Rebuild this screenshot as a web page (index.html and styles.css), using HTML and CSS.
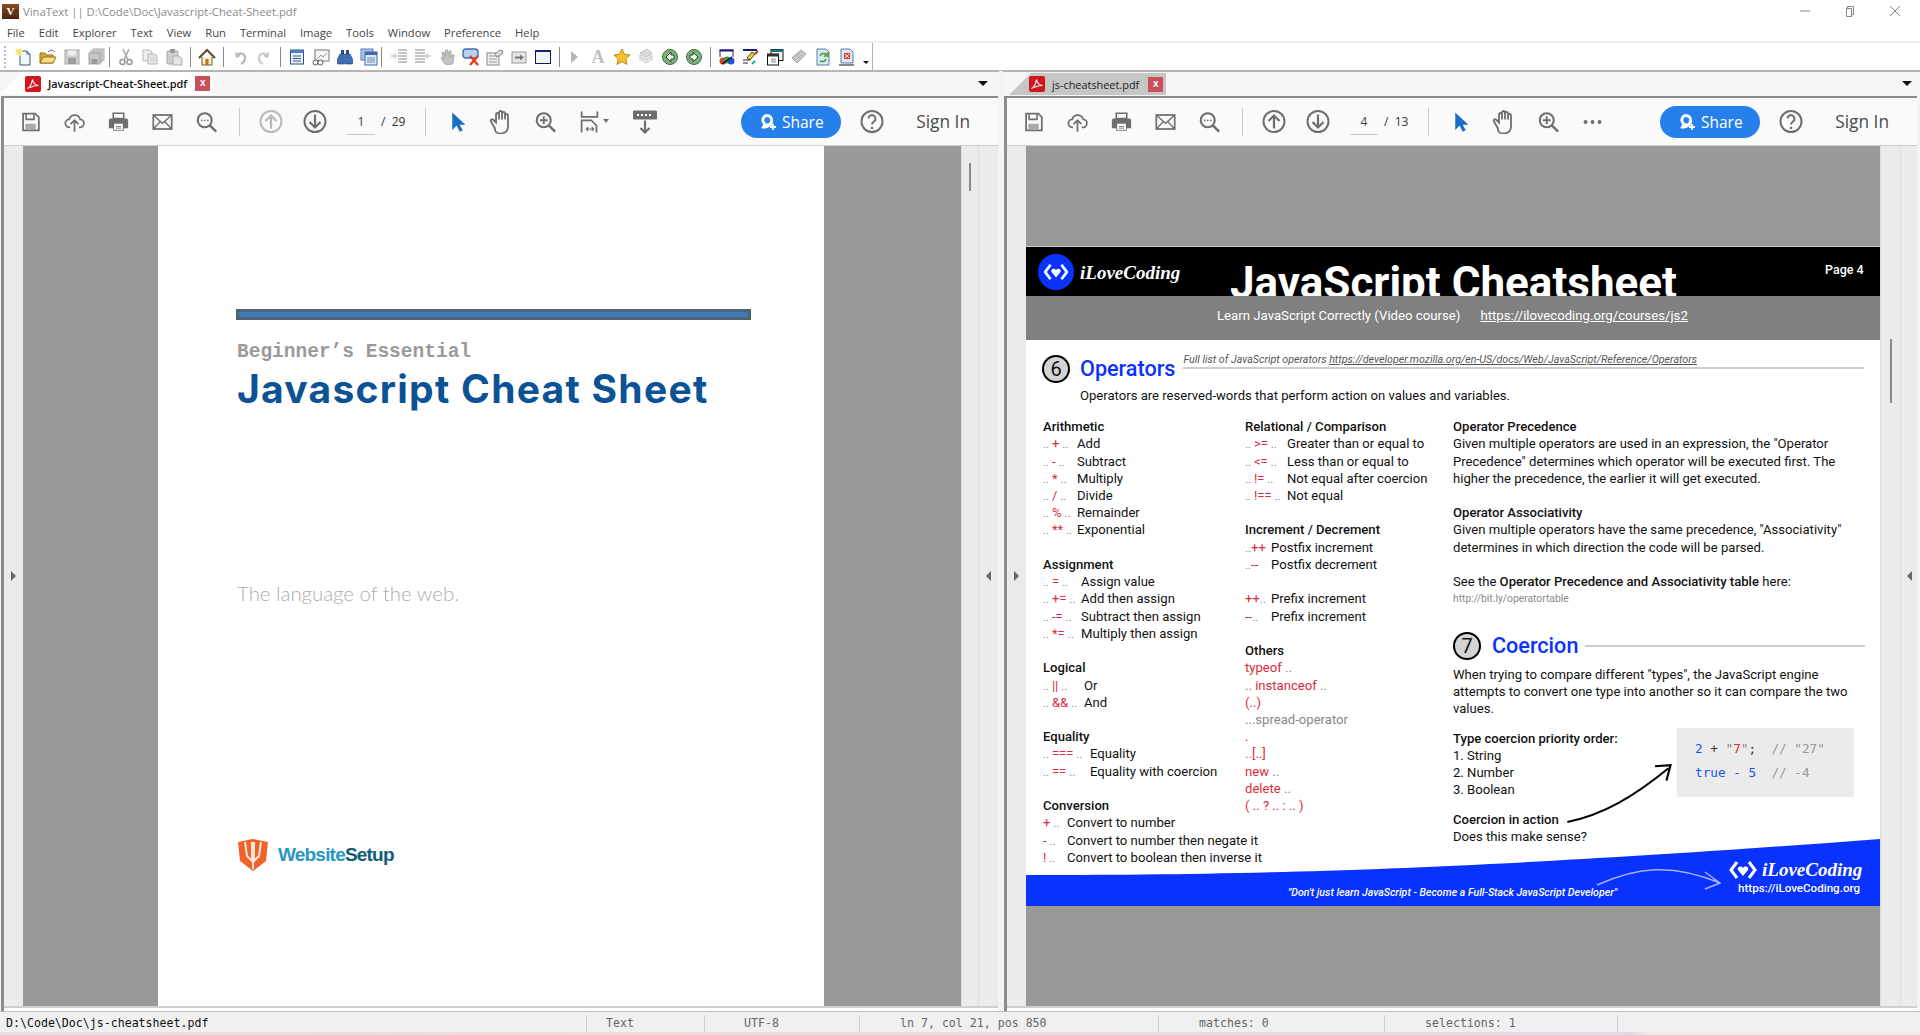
FILE: index.html
```html
<!DOCTYPE html>
<html lang="en">
<head>
<meta charset="utf-8">
<title>VinaText</title>
<link rel="stylesheet" href="styles.css">
</head>
<body>
<svg class="sprite" xmlns="http://www.w3.org/2000/svg">
  <symbol id="t-new" viewBox="0 0 18 18"><path d="M5 3h7l3 3v11H5z" fill="#f2f7fc" stroke="#34567f"/><path d="M12 3v3h3" fill="#cfe0f0" stroke="#34567f"/><rect x="1" y="1" width="6" height="6" fill="#f5dc78" stroke="#fff3b0"/></symbol>
  <symbol id="t-open" viewBox="0 0 18 18"><path d="M1 5h5l1 2h7v8H1z" fill="#dba93a" stroke="#91701f"/><path d="M1 15l3-6h13l-3 6z" fill="#f8dd84" stroke="#91701f"/><path d="M9 4c3-3 5-2 7 0" stroke="#667" fill="none"/></symbol>
  <symbol id="t-save" viewBox="0 0 18 18"><rect x="2" y="2" width="14" height="14" fill="#cdcdcd" stroke="#a8a8a8"/><rect x="5" y="2.500" width="8" height="5" fill="#efefef"/><rect x="5" y="10" width="8" height="6" fill="#9c9c9c"/></symbol>
  <symbol id="t-saveall" viewBox="0 0 18 18"><rect x="6" y="1" width="11" height="11" fill="#ddd" stroke="#aaa"/><rect x="4" y="3" width="11" height="11" fill="#d2d2d2" stroke="#aaa"/><rect x="2" y="5" width="11" height="11" fill="#c6c6c6" stroke="#a0a0a0"/><rect x="4.500" y="11" width="6" height="5" fill="#999"/></symbol>
  <symbol id="t-cut" viewBox="0 0 18 18"><path d="M6 1l5 11M12 1L7 12" stroke="#aaa" stroke-width="1.600" fill="none"/><circle cx="5.500" cy="14" r="2.500" fill="none" stroke="#999" stroke-width="1.500"/><circle cx="12.500" cy="14" r="2.500" fill="none" stroke="#999" stroke-width="1.500"/></symbol>
  <symbol id="t-copy" viewBox="0 0 18 18"><path d="M2 2h7l2 2v9H2z" fill="#eee" stroke="#bbb"/><path d="M7 6h7l2 2v8H7z" fill="#e5e5e5" stroke="#b5b5b5"/><path d="M9 10h5M9 12h5" stroke="#ccc"/></symbol>
  <symbol id="t-paste" viewBox="0 0 18 18"><rect x="2" y="3" width="11" height="13" rx="1" fill="#cfcfcf" stroke="#a5a5a5"/><rect x="5" y="1" width="5" height="4" fill="#999"/><path d="M8 8h6l3 3v6H8z" fill="#e5e5e5" stroke="#aaa"/></symbol>
  <symbol id="t-home" viewBox="0 0 18 18"><path d="M4 9v8h10V9" fill="#fbeec0" stroke="#665a30"/><path d="M1 10l8-8 8 8" fill="none" stroke="#5a4a28" stroke-width="2"/><rect x="7.500" y="11" width="3" height="6" fill="#b8731c"/></symbol>
  <symbol id="t-undo" viewBox="0 0 18 18"><path d="M4 4l1 6 5-2z" fill="#bbb"/><path d="M6 7c4-3 8-1 8 3 0 3-2 5-4 6" fill="none" stroke="#bbb" stroke-width="2.400"/></symbol>
  <symbol id="t-redo" viewBox="0 0 18 18"><path d="M14 4l-1 6-5-2z" fill="#bbb"/><path d="M12 7C8 4 4 6 4 10c0 3 2 5 4 6" fill="none" stroke="#cfcfcf" stroke-width="2.400"/></symbol>
  <symbol id="t-doc" viewBox="0 0 18 18"><rect x="2.500" y="2" width="13" height="14" fill="#eaf1fa" stroke="#2d4f82"/><rect x="2.500" y="2" width="13" height="3" fill="#4b7fc2"/><path d="M5 8h8M5 10.500h8M5 13h8" stroke="#36598c"/></symbol>
  <symbol id="t-chart" viewBox="0 0 18 18"><rect x="3" y="2" width="14" height="11" fill="#f5f5f5" stroke="#777"/><path d="M5 11l4-4 2 2 4-4" fill="none" stroke="#999"/><circle cx="3.500" cy="14.500" r="2.500" fill="#fff" stroke="#555"/><circle cx="8.500" cy="14.500" r="2.500" fill="#fff" stroke="#555"/></symbol>
  <symbol id="t-binoc" viewBox="0 0 18 18"><path d="M5 2h3v5H5zM10 2h3v5h-3z" fill="#244f8c"/><path d="M4 6h4.500v10H1.500V11zM14 6H9.500v10h7V11z" fill="#3a6fb8" stroke="#1d3b6b" stroke-width=".6"/></symbol>
  <symbol id="t-win" viewBox="0 0 18 18"><rect x="1" y="1" width="12" height="11" fill="#a9c3e6" stroke="#5a7fb3"/><rect x="5" y="4" width="12" height="13" fill="#dde8f6" stroke="#3e6aa8"/><rect x="5" y="4" width="12" height="3" fill="#3e6aa8"/><path d="M7 10h8M7 12h8M7 14h8" stroke="#6e8fbf"/></symbol>
  <symbol id="t-indent" viewBox="0 0 18 18"><path d="M8 2h9M8 5h9M8 8h9M8 11h9M8 14h9" stroke="#888"/><path d="M1 8h5M4 5.500L6.500 8 4 10.500" stroke="#aaa" fill="none"/></symbol>
  <symbol id="t-outdent" viewBox="0 0 18 18"><path d="M1 2h10M1 5h10M1 8h10M1 11h10M1 14h10" stroke="#888"/><path d="M17 8h-5M14 5.500L11.500 8l2.500 2.500" stroke="#aaa" fill="none"/></symbol>
  <symbol id="t-hand" viewBox="0 0 18 18"><path d="M3 9l3 6c1 2 8 2 9 0l1-8-2 0-1 3V3l-2 0-.500 6-1-7-2 0 0 7-1.500-5-2 .500 1 7z" fill="#c4c4c4" stroke="#aaa"/></symbol>
  <symbol id="t-msgx" viewBox="0 0 18 18"><rect x="1" y="1" width="15" height="9" rx="3" fill="#b9d0ee" stroke="#3c6fb5" stroke-width="1.400"/><path d="M8 8l8 9M16 8l-8 9" stroke="#e23b28" stroke-width="2.400"/></symbol>
  <symbol id="t-form" viewBox="0 0 18 18"><rect x="1" y="5" width="12" height="12" fill="#eee" stroke="#888"/><path d="M3 8h8M3 11h8M3 14h8" stroke="#999"/><path d="M9 6l5-4 3 1-1 3-5 3z" fill="#ddd" stroke="#888"/></symbol>
  <symbol id="t-box" viewBox="0 0 18 18"><rect x="2" y="4" width="14" height="11" fill="#e5e5e5" stroke="#999"/><path d="M5 9.500h6" stroke="#777" stroke-width="2"/><path d="M10 6.500l4 3-4 3z" fill="#777"/></symbol>
  <symbol id="t-frame" viewBox="0 0 18 18"><rect x="1.500" y="2.500" width="15" height="13" fill="#eef3fa" stroke="#111a50"/><rect x="1.500" y="2" width="15" height="2" fill="#14207a"/></symbol>
  <symbol id="t-play" viewBox="0 0 18 18"><path d="M6 3l7 6-7 6z" fill="#b5b5b5"/></symbol>
  <symbol id="t-star" viewBox="0 0 18 18"><path d="M9 1l2.400 5.300 5.600.700-4.200 3.800 1.200 5.700L9 13.600 4 16.500l1.200-5.700L1 7l5.600-.700z" fill="#f6c32c" stroke="#b88a12"/></symbol>
  <symbol id="t-stack" viewBox="0 0 18 18"><path d="M2 11l7 4 7-4-7-4z" fill="#eee" stroke="#ccc"/><path d="M2 8l7 4 7-4-7-4z" fill="#e8e8e8" stroke="#c8c8c8"/><path d="M3 5l6 4 6-4-5-4z" fill="#ddd" stroke="#c0c0c0"/></symbol>
  <symbol id="t-back" viewBox="0 0 18 18"><circle cx="9" cy="9" r="7.500" fill="#7eb17e" stroke="#3f6b3f"/><path d="M10 4L5 9l5 5v-3h3V7h-3z" fill="#eef5ee" stroke="#264726"/></symbol>
  <symbol id="t-fwd" viewBox="0 0 18 18"><circle cx="9" cy="9" r="7.500" fill="#7eb17e" stroke="#3f6b3f"/><path d="M8 4l5 5-5 5v-3H5V7h3z" fill="#eef5ee" stroke="#264726"/></symbol>
  <symbol id="t-c1" viewBox="0 0 18 18"><path d="M2 2h13v7M2 2v7" fill="#fff" stroke="#1d2a6b"/><rect x="1.500" y="1.500" width="14" height="2" fill="#16207a"/><circle cx="5" cy="13" r="3.500" fill="#e23b28"/><circle cx="9" cy="12" r="3.500" fill="#2e9e3e"/><circle cx="13" cy="13" r="3.500" fill="#2a50d0"/><path d="M4 16L14 9" stroke="#111" stroke-width="1.500"/></symbol>
  <symbol id="t-c2" viewBox="0 0 18 18"><rect x="1" y="1" width="14" height="2" fill="#16207a"/><path d="M5 10l5-6 3 2-5 6z" fill="#f2d21c" stroke="#444"/><path d="M13 6l3-3" stroke="#c33" stroke-width="2"/><path d="M1 12h7M1 15h5" stroke="#222"/><path d="M10 16l3-3" stroke="#2a9" stroke-width="2"/></symbol>
  <symbol id="t-c3" viewBox="0 0 18 18"><rect x="5" y="1.500" width="12" height="11" fill="#eef" stroke="#111"/><rect x="5" y="1.500" width="12" height="2.500" fill="#157a7a"/><rect x="1.500" y="6" width="11" height="11" fill="#fff" stroke="#111"/><rect x="1.500" y="6" width="11" height="2.500" fill="#333"/><rect x="6" y="11" width="3" height="3" fill="none" stroke="#888"/></symbol>
  <symbol id="t-c4" viewBox="0 0 18 18"><path d="M2 10l9-8 5 4-9 9z" fill="#c9c9c9" stroke="#a0a0a0"/><path d="M6 8l4-3M8 10l4-3" stroke="#aaa"/></symbol>
  <symbol id="t-c5" viewBox="0 0 18 18"><path d="M3 1h9l3 3v13H3z" fill="#dce8f5" stroke="#5f7fa5"/><path d="M6 8c1-3 4-3 6-2l-1 2 3 0 0-3-1 1" fill="none" stroke="#3f9a2c" stroke-width="1.500"/><path d="M12 11c-1 3-4 3-6 2" fill="none" stroke="#3f9a2c" stroke-width="1.500"/></symbol>
  <symbol id="t-c6" viewBox="0 0 18 18"><path d="M3 1h9l3 3v11H3z" fill="#dce8f5" stroke="#5f7fa5"/><rect x="6" y="5" width="6" height="6" fill="#e23b28"/><path d="M7 6l4 4M11 6l-4 4" stroke="#fff"/><path d="M1 17h15" stroke="#111"/></symbol>

  <symbol id="p-save" viewBox="0 0 24 24"><path d="M3.500 2.500h14l4 4v15h-18z" fill="none" stroke="#6e6e6e" stroke-width="2"/><path d="M7 3v6h9V3" fill="none" stroke="#6e6e6e" stroke-width="1.800"/><rect x="6" y="14" width="12" height="7" fill="#aaa"/></symbol>
  <symbol id="p-upload" viewBox="0 0 24 24"><path d="M7 18H6a4.500 4.500 0 0 1 0-9 6.500 6.500 0 0 1 12.500 0 4.500 4.500 0 0 1-.5 9h-1" fill="none" stroke="#6e6e6e" stroke-width="2"/><path d="M12 23V10M7.500 14.500L12 10l4.500 4.500" fill="none" stroke="#6e6e6e" stroke-width="2"/></symbol>
  <symbol id="p-print" viewBox="0 0 24 24"><path d="M6 2h12v6H6z" fill="none" stroke="#6e6e6e" stroke-width="1.800"/><path d="M3 8h18a2 2 0 0 1 2 2v9h-5v3H6v-3H1v-9a2 2 0 0 1 2-2z" fill="#6e6e6e"/><rect x="7" y="14" width="10" height="7" fill="#fff"/><path d="M9 17h6M9 19h6" stroke="#6e6e6e"/></symbol>
  <symbol id="p-mail" viewBox="0 0 24 24"><rect x="1.500" y="4" width="21" height="16" fill="none" stroke="#6e6e6e" stroke-width="2"/><path d="M2 4.500l10 9 10-9M2 19.500l7.500-8M22 19.500l-7.500-8" fill="none" stroke="#6e6e6e" stroke-width="1.500"/></symbol>
  <symbol id="p-find" viewBox="0 0 24 24"><circle cx="10" cy="10" r="8" fill="none" stroke="#6e6e6e" stroke-width="2.400"/><path d="M15.500 15.500L23 23" stroke="#6e6e6e" stroke-width="2.800"/><circle cx="6.500" cy="10" r="1" fill="#6e6e6e"/><circle cx="10" cy="10" r="1" fill="#6e6e6e"/><circle cx="13.500" cy="10" r="1" fill="#6e6e6e"/></symbol>
  <symbol id="p-up" viewBox="0 0 24 24"><circle cx="12" cy="12" r="10.500" fill="none" stroke="currentColor" stroke-width="2"/><path d="M12 19V6M6.500 11.500L12 6l5.500 5.500" fill="none" stroke="currentColor" stroke-width="2.200"/></symbol>
  <symbol id="p-down" viewBox="0 0 24 24"><circle cx="12" cy="12" r="10.500" fill="none" stroke="currentColor" stroke-width="2"/><path d="M12 5v13M6.500 12.500L12 18l5.500-5.500" fill="none" stroke="currentColor" stroke-width="2.200"/></symbol>
  <symbol id="p-arrow" viewBox="0 0 24 24"><path d="M6 1v20l5-5 3.500 7 3.500-1.500-3.500-6.500H21z" fill="#1a6fc4"/></symbol>
  <symbol id="p-hand" viewBox="0 0 24 24"><path d="M6 19l-4-7c-1-2 1-3 2.500-1.500L7 13V5c0-2 3-2 3 0v5-7c0-2 3-2 3 0v7-6c0-2 3-2 3 0v6-4c0-2 3-2 3 0v11c0 8-11 9-13 4z" fill="none" stroke="#6e6e6e" stroke-width="1.800"/></symbol>
  <symbol id="p-zoom" viewBox="0 0 24 24"><circle cx="10" cy="10" r="8" fill="none" stroke="#6e6e6e" stroke-width="2.400"/><path d="M15.500 15.500L23 23" stroke="#6e6e6e" stroke-width="2.800"/><path d="M10 5.500v9M5.500 10h9" stroke="#6e6e6e" stroke-width="2.200"/></symbol>
  <symbol id="p-fit" viewBox="0 0 24 24"><path d="M3 0v6h18V0" fill="none" stroke="#6e6e6e" stroke-width="2"/><path d="M3 24V10h11l6 6v8" fill="none" stroke="#6e6e6e" stroke-width="2"/><path d="M8 20h9M8 20l2.500-2M8 20l2.500 2M17 20l-2.500-2M17 20l-2.500 2" fill="none" stroke="#6e6e6e" stroke-width="1.300"/></symbol>
  <symbol id="p-kbd" viewBox="0 0 24 24"><rect x="0" y="1" width="24" height="9" rx="1" fill="#6e6e6e"/><path d="M4 5.500h2M8 5.500h2M12 5.500h2M16 5.500h2" stroke="#fff" stroke-width="1.800"/><path d="M12 11v12M7.500 18.500L12 23l4.500-4.500" fill="none" stroke="#6e6e6e" stroke-width="2.200"/></symbol>
  <symbol id="p-share" viewBox="0 0 18 18"><path d="M8 1a6 6 0 0 0-4 10c0 2-1 3-2 4 3 1 6 .500 8-1a6.500 6.500 0 0 0 4-7A6 6 0 0 0 8 1z" fill="#fff"/><path d="M8 4a3 3 0 0 0-2 5c1 2 4 2 4.500 0A3 3 0 0 0 8 4z" fill="#2680eb"/><path d="M14 11v6M11 14h6" stroke="#fff" stroke-width="1.800"/></symbol>
  <symbol id="p-help" viewBox="0 0 24 24"><circle cx="12" cy="12" r="10.500" fill="none" stroke="#6e6e6e" stroke-width="2"/><path d="M8.500 9a3.500 3.500 0 1 1 5.500 3c-1.500 1-2 1.500-2 3" fill="none" stroke="#6e6e6e" stroke-width="2"/><circle cx="12" cy="18.500" r="1.300" fill="#6e6e6e"/></symbol>
  <symbol id="p-more" viewBox="0 0 24 24"><circle cx="4" cy="12" r="2.200" fill="#6e6e6e"/><circle cx="12" cy="12" r="2.200" fill="#6e6e6e"/><circle cx="20" cy="12" r="2.200" fill="#6e6e6e"/></symbol>
  <symbol id="pdf-badge" viewBox="0 0 16 16"><rect width="16" height="16" rx="2" fill="#d2151b"/><path d="M2.500 12.500c2-1 4-4 5-9 .500 3 2 5.500 6 6-3 0-6 .500-8.500 2" fill="none" stroke="#fff" stroke-width="1.200"/></symbol>
  <symbol id="ilc-mark" viewBox="0 0 28 20"><path d="M8 2L2 10l6 8M20 2l6 8-6 8" fill="none" stroke="#fff" stroke-width="3"/><path d="M14 16l-5-6c-1.500-3 3-5 5-2 2-3 6.500-1 5 2z" fill="#fff"/></symbol>
</svg>

<header class="titlebar">
  <span class="app-icon">V</span>
  <span class="app-title">VinaText || D:\Code\Doc\Javascript-Cheat-Sheet.pdf</span>
  <div class="winbtns">
    <svg class="winbtn" viewBox="0 0 12 12"><path d="M1 6h10" stroke="#888" fill="none"/></svg>
    <svg class="winbtn" viewBox="0 0 12 12"><path d="M3.500 3.500v-2h6v8h-2M2.500 3.500h5v8h-5z" stroke="#888" fill="none"/></svg>
    <svg class="winbtn" viewBox="0 0 12 12"><path d="M1 1l10 10M11 1L1 11" stroke="#888" fill="none"/></svg>
  </div>
</header>

<nav class="menubar">
  <span>File</span><span>Edit</span><span>Explorer</span><span>Text</span><span>View</span><span>Run</span><span>Terminal</span><span>Image</span><span>Tools</span><span>Window</span><span>Preference</span><span>Help</span>
</nav>

<div class="toolbar">
  <div class="tools">
    <span class="grip"></span>
    <svg class="ti"><use href="#t-new"/></svg><svg class="ti"><use href="#t-open"/></svg><svg class="ti"><use href="#t-save"/></svg><svg class="ti"><use href="#t-saveall"/></svg>
    <span class="tsep first"></span>
    <svg class="ti"><use href="#t-cut"/></svg><svg class="ti"><use href="#t-copy"/></svg><svg class="ti"><use href="#t-paste"/></svg>
    <span class="tsep"></span>
    <svg class="ti"><use href="#t-home"/></svg>
    <span class="tsep"></span>
    <svg class="ti"><use href="#t-undo"/></svg><svg class="ti"><use href="#t-redo"/></svg>
    <span class="tsep"></span>
    <svg class="ti"><use href="#t-doc"/></svg><svg class="ti"><use href="#t-chart"/></svg><svg class="ti"><use href="#t-binoc"/></svg><svg class="ti"><use href="#t-win"/></svg>
    <span class="tsep wide"></span>
    <svg class="ti"><use href="#t-indent"/></svg><svg class="ti"><use href="#t-outdent"/></svg><svg class="ti"><use href="#t-hand"/></svg><svg class="ti"><use href="#t-msgx"/></svg><svg class="ti"><use href="#t-form"/></svg><svg class="ti"><use href="#t-box"/></svg><svg class="ti"><use href="#t-frame"/></svg>
    <span class="tsep tight"></span>
    <svg class="ti"><use href="#t-play"/></svg><span class="ti ti-letter">A</span><svg class="ti"><use href="#t-star"/></svg><svg class="ti"><use href="#t-stack"/></svg><svg class="ti"><use href="#t-back"/></svg><svg class="ti"><use href="#t-fwd"/></svg>
    <span class="tsep"></span>
    <svg class="ti"><use href="#t-c1"/></svg><svg class="ti"><use href="#t-c2"/></svg><svg class="ti"><use href="#t-c3"/></svg><svg class="ti"><use href="#t-c4"/></svg><svg class="ti"><use href="#t-c5"/></svg><svg class="ti"><use href="#t-c6"/></svg>
    <span class="tcaret"></span>
  </div>
</div>

<main class="panes">
  <section class="pane pane-left">
    <div class="tabbar">
      <div class="tab tab-active">
        <svg class="tab-icon"><use href="#pdf-badge"/></svg>
        <span class="tab-name">Javascript-Cheat-Sheet.pdf</span>
        <span class="tab-x">x</span>
      </div>
      <span class="tabs-menu"></span>
    </div>
    <div class="frame">
      <div class="pdfbar">
        <div class="pb"><svg class="pi"><use href="#p-save"/></svg></div>
        <div class="pb"><svg class="pi"><use href="#p-upload"/></svg></div>
        <div class="pb"><svg class="pi"><use href="#p-print"/></svg></div>
        <div class="pb"><svg class="pi"><use href="#p-mail"/></svg></div>
        <div class="pb"><svg class="pi"><use href="#p-find"/></svg></div>
        <span class="psep"></span>
        <div class="pb pb-off"><svg class="pi pi-lg"><use href="#p-up"/></svg></div>
        <div class="pb pb-on"><svg class="pi pi-lg"><use href="#p-down"/></svg></div>
        <div class="pager"><span class="pager-cur">1</span><span class="pager-total">/&nbsp; 29</span></div>
        <span class="psep"></span>
        <div class="pb"><svg class="pi"><use href="#p-arrow"/></svg></div>
        <div class="pb"><svg class="pi pi-lg"><use href="#p-hand"/></svg></div>
        <div class="pb"><svg class="pi"><use href="#p-zoom"/></svg></div>
        <div class="pb pb-fit"><svg class="pi"><use href="#p-fit"/></svg><span class="mini-caret"></span></div>
        <div class="pb pb-kbd"><svg class="pi pi-lg"><use href="#p-kbd"/></svg></div>
        <button class="share"><svg class="share-icon"><use href="#p-share"/></svg>Share</button>
        <div class="pb pb-help"><svg class="pi pi-lg"><use href="#p-help"/></svg></div>
        <span class="signin">Sign In</span>
      </div>
      <div class="viewer">
        <div class="gutter"><span class="arrow-r"></span></div>
        <div class="canvas canvas-left">
          <article class="cover">
            <div class="cover-bar"></div>
            <p class="cover-kicker">Beginner’s Essential</p>
            <h1 class="cover-title">Javascript Cheat Sheet</h1>
            <p class="cover-sub">The language of the web.</p>
            <div class="ws-logo">
              <svg class="ws-shield" viewBox="0 0 30 32"><path d="M0 3l15-3 15 3-2 19-13 10L2 22z" fill="#f0622a"/><path d="M7 3l2 14 5 5V3M23 3l-2 14-5 5V3" fill="none" stroke="#fbe6da" stroke-width="2"/><path d="M15 22v8" stroke="#fbe6da" stroke-width="2"/></svg>
              <span class="ws-name"><span class="ws-a">Website</span><span class="ws-b">Setup</span></span>
            </div>
          </article>
        </div>
        <div class="side side-a"><span class="thumb thumb-left"></span></div>
        <div class="side side-b"><span class="arrow-l"></span></div>
      </div>
      <div class="frame-foot"></div>
    </div>
  </section>

  <section class="pane pane-right">
    <div class="tabbar">
      <div class="tab tab-idle">
        <svg class="tab-icon"><use href="#pdf-badge"/></svg>
        <span class="tab-name">js-cheatsheet.pdf</span>
        <span class="tab-x">x</span>
      </div>
      <span class="tabs-menu"></span>
    </div>
    <div class="frame">
      <div class="pdfbar">
        <div class="pb"><svg class="pi"><use href="#p-save"/></svg></div>
        <div class="pb"><svg class="pi"><use href="#p-upload"/></svg></div>
        <div class="pb"><svg class="pi"><use href="#p-print"/></svg></div>
        <div class="pb"><svg class="pi"><use href="#p-mail"/></svg></div>
        <div class="pb"><svg class="pi"><use href="#p-find"/></svg></div>
        <span class="psep"></span>
        <div class="pb pb-on"><svg class="pi pi-lg"><use href="#p-up"/></svg></div>
        <div class="pb pb-on"><svg class="pi pi-lg"><use href="#p-down"/></svg></div>
        <div class="pager"><span class="pager-cur">4</span><span class="pager-total">/&nbsp; 13</span></div>
        <span class="psep"></span>
        <div class="pb"><svg class="pi"><use href="#p-arrow"/></svg></div>
        <div class="pb"><svg class="pi pi-lg"><use href="#p-hand"/></svg></div>
        <div class="pb"><svg class="pi"><use href="#p-zoom"/></svg></div>
        <div class="pb"><svg class="pi"><use href="#p-more"/></svg></div>
        <button class="share"><svg class="share-icon"><use href="#p-share"/></svg>Share</button>
        <div class="pb pb-help"><svg class="pi pi-lg"><use href="#p-help"/></svg></div>
        <span class="signin">Sign In</span>
      </div>
      <div class="viewer">
        <div class="gutter"><span class="arrow-r"></span></div>
        <div class="canvas canvas-right">
          <article class="sheet">
            <header class="sheet-top">
              <svg class="ilc-circle" viewBox="0 0 36 36"><circle cx="18" cy="18" r="18" fill="#0a32ff"/><use href="#ilc-mark" x="5" y="9" width="26" height="18"/></svg>
              <span class="ilc-word">iLoveCoding</span>
              <span class="sheet-title">JavaScript Cheatsheet</span>
              <span class="sheet-page">Page 4</span>
            </header>
            <div class="sheet-band"><span>Learn JavaScript Correctly (Video course)</span><a class="band-link">https://ilovecoding.org/courses/js2</a></div>

            <div class="sec-head sec6">
              <span class="num">6</span>
              <h2 class="sec-title">Operators</h2>
              <div class="sec-rule-wrap">
                <p class="sec-note">Full list of JavaScript operators <u>https://developer.mozilla.org/en-US/docs/Web/JavaScript/Reference/Operators</u></p>
              </div>
            </div>
            <p class="sec-desc">Operators are reserved-words that perform action on values and variables.</p>

            <div class="sheet-cols">
              <div class="col col1">
                <div class="grp">
                  <div class="gh">Arithmetic</div>
                  <div class="ops w34">
                    <span class="op">.. <b>+</b> ..</span><span>Add</span>
                    <span class="op">.. <b>-</b> ..</span><span>Subtract</span>
                    <span class="op">.. <b>*</b> ..</span><span>Multiply</span>
                    <span class="op">.. <b>/</b> ..</span><span>Divide</span>
                    <span class="op">.. <b>%</b> ..</span><span>Remainder</span>
                    <span class="op">.. <b>**</b> ..</span><span>Exponential</span>
                  </div>
                </div>
                <div class="grp">
                  <div class="gh">Assignment</div>
                  <div class="ops w38">
                    <span class="op">.. <b>=</b> ..</span><span>Assign value</span>
                    <span class="op">.. <b>+=</b> ..</span><span>Add then assign</span>
                    <span class="op">.. <b>-=</b> ..</span><span>Subtract then assign</span>
                    <span class="op">.. <b>*=</b> ..</span><span>Multiply then assign</span>
                  </div>
                </div>
                <div class="grp">
                  <div class="gh">Logical</div>
                  <div class="ops w41">
                    <span class="op">.. <b>||</b> ..</span><span>Or</span>
                    <span class="op">.. <b>&amp;&amp;</b> ..</span><span>And</span>
                  </div>
                </div>
                <div class="grp">
                  <div class="gh">Equality</div>
                  <div class="ops w47">
                    <span class="op">.. <b>===</b> ..</span><span>Equality</span>
                    <span class="op">.. <b>==</b> ..</span><span>Equality with coercion</span>
                  </div>
                </div>
                <div class="grp">
                  <div class="gh">Conversion</div>
                  <div class="ops w24">
                    <span class="op"><b>+</b> ..</span><span>Convert to number</span>
                    <span class="op"><b>-</b> ..</span><span>Convert to number then negate it</span>
                    <span class="op"><b>!</b> ..</span><span>Convert to boolean then inverse it</span>
                  </div>
                </div>
              </div>

              <div class="col col2">
                <div class="grp">
                  <div class="gh">Relational / Comparison</div>
                  <div class="ops w42">
                    <span class="op">.. <b>&gt;=</b> ..</span><span>Greater than or equal to</span>
                    <span class="op">.. <b>&lt;=</b> ..</span><span>Less than or equal to</span>
                    <span class="op">.. <b>!=</b> ..</span><span>Not equal after coercion</span>
                    <span class="op">.. <b>!==</b> ..</span><span>Not equal</span>
                  </div>
                </div>
                <div class="grp">
                  <div class="gh">Increment / Decrement</div>
                  <div class="ops w26">
                    <span class="op">..<b>++</b></span><span>Postfix increment</span>
                    <span class="op">..<b>--</b></span><span>Postfix decrement</span>
                    <span class="blank"></span>
                    <span class="op"><b>++</b>..</span><span>Prefix increment</span>
                    <span class="op"><b>--</b>..</span><span>Prefix increment</span>
                  </div>
                </div>
                <div class="grp">
                  <div class="gh">Others</div>
                  <div class="reds">
                    <div><b>typeof</b> ..</div>
                    <div>.. <b>instanceof</b> ..</div>
                    <div><b>(..)</b></div>
                    <div>...<span class="spread">spread-operator</span></div>
                    <div><b>.</b></div>
                    <div>..<b>[..]</b></div>
                    <div><b>new</b> ..</div>
                    <div><b>delete</b> ..</div>
                    <div><b>( .. ? .. : .. )</b></div>
                  </div>
                </div>
              </div>

              <div class="col col3">
                <div class="grp">
                  <div class="gh">Operator Precedence</div>
                  <div>Given multiple operators are used in an expression, the "Operator</div>
                  <div>Precedence" determines which operator will be executed first. The</div>
                  <div>higher the precedence, the earlier it will get executed.</div>
                </div>
                <div class="grp">
                  <div class="gh">Operator Associativity</div>
                  <div>Given multiple operators have the same precedence, "Associativity"</div>
                  <div>determines in which direction the code will be parsed.</div>
                </div>
                <div class="grp">
                  <div>See the <span class="gh">Operator Precedence and Associativity table</span> here:</div>
                  <div class="short-link">http://bit.ly/operatortable</div>
                </div>
                <div class="sec-head sec7">
                  <span class="num">7</span>
                  <h2 class="sec-title">Coercion</h2>
                  <span class="sec-rule"></span>
                </div>
                <div class="sec7-body">
                  <div>When trying to compare different "types", the JavaScript engine</div>
                  <div>attempts to convert one type into another so it can compare the two</div>
                  <div>values.</div>
                </div>
                <div class="coerce">
                  <div class="coerce-list">
                    <div class="gh">Type coercion priority order:</div>
                    <div>1. String</div>
                    <div>2. Number</div>
                    <div>3. Boolean</div>
                    <div class="gh coerce-gap">Coercion in action</div>
                    <div>Does this make sense?</div>
                  </div>
                  <pre class="code"><span class="c-num">2</span> + <span class="c-str">"</span><span class="c-red">7</span><span class="c-str">"</span>;  <span class="c-com">// "27"</span>
<span class="c-num">true</span> <span class="c-num">-</span> <span class="c-num">5</span>  <span class="c-com">// -4</span></pre>
                </div>
              </div>
            </div>

            <svg class="curve-arrow" viewBox="0 0 110 62"><path d="M3 59c35-7 65-25 98-52" fill="none" stroke="#000" stroke-width="2"/><path d="M88 5l15-1-4 15" fill="none" stroke="#000" stroke-width="2"/></svg>

            <footer class="sheet-foot">
              <svg class="foot-bg" viewBox="0 0 854 67" preserveAspectRatio="none"><path d="M0 36C200 36 420 33 854 0V67H0z" fill="#0a32ff"/><path d="M571 46c40-18 75-22 123-2M679 33l15 11-15 6" fill="none" stroke="#9fb2ff" stroke-width="1.500"/></svg>
              <span class="foot-quote">"Don't just learn JavaScript - Become a Full-Stack JavaScript Developer"</span>
              <div class="foot-brand">
                <div class="foot-logo"><svg class="foot-mark"><use href="#ilc-mark"/></svg><span class="foot-word">iLoveCoding</span></div>
                <div class="foot-url">https://iLoveCoding.org</div>
              </div>
            </footer>
          </article>
        </div>
        <div class="side side-b"><span class="thumb thumb-right"></span></div>
        <div class="side side-a"><span class="arrow-l"></span></div>
      </div>
      <div class="frame-foot"></div>
    </div>
  </section>
</main>

<footer class="status">
  <span class="st st-path">D:\Code\Doc\js-cheatsheet.pdf</span>
  <span class="st st-type">Text</span>
  <span class="st st-enc">UTF-8</span>
  <span class="st st-pos">ln 7, col 21, pos 850</span>
  <span class="st st-match">matches: 0</span>
  <span class="st st-sel">selections: 1</span>
  <span class="st st-rest"></span>
</footer>
<div class="desktop-strip"></div>
</body>
</html>
```
FILE: styles.css
```css
* { box-sizing: border-box; }
html, body { margin: 0; padding: 0; }
body {
  width: 1920px; height: 1035px; overflow: hidden;
  display: flex; flex-direction: column;
  background: #f0f0f0; color: #111;
  font-family: "Open Sans", "Liberation Sans", sans-serif;
}
.sprite { width: 0; height: 0; position: absolute; }

/* title + menu */
.titlebar { height: 22px; background: #fff; display: flex; align-items: center; padding-left: 2px; flex: none; }
.app-icon { width: 17px; height: 15px; background: linear-gradient(#8a4a20, #4a2410); color: #fff; font: 700 11px/15px "Liberation Serif", serif; text-align: center; }
.app-title { margin-left: 4px; font-size: 11.300px; color: #8a8a8a; }
.winbtns { margin-left: auto; display: flex; gap: 33px; padding-right: 19px; }
.winbtn { width: 12px; height: 12px; }
.menubar { height: 19px; padding-top: 2px; background: #fff; display: flex; align-items: center; gap: 14px; padding-left: 7px; font-size: 11.200px; color: #444; flex: none; }

/* app toolbar */
.toolbar { height: 30px; border-top: 2px solid #f0f0f0; border-bottom: 1px solid #b5b5b5; background: #fff; flex: none; }
.tools { width: 873px; height: 100%; display: flex; align-items: center; border-right: 1px solid #b5b5b5; padding-left: 4px; }
.grip { width: 3px; height: 22px; margin-right: 4.500px; border-left: 2px dotted #bbb; }
.ti { width: 18px; height: 18px; margin: 0 3px; flex: none; }
.ti-letter { font: 700 18px/18px "Liberation Serif", serif; color: #c0c0c0; text-align: center; }
.tsep { width: 1px; height: 20px; margin: 0 4px; background: #8a8a8a; flex: none; }
.tsep.first { margin-left: 1.500px; }
.tsep.wide { margin-left: 0; margin-right: 5px; }
.tsep.tight { margin-right: 2px; }
.tcaret { width: 0; height: 0; margin: 12px 0 0 4px; border: 3px solid transparent; border-top: 3px solid #111; border-bottom: 0; }

/* panes */
.panes { display: flex; height: 940px; flex: none; background: #f4f4f4; }
.pane { display: flex; flex-direction: column; }
.pane-left { width: 1003px; }
.pane-right { width: 917px; }
.tabbar { height: 25px; display: flex; align-items: flex-start; background: #f6f6f6; border-top: 1px solid #b5b5b5; position: relative; flex: none; }
.pane-left .tabbar { margin-right: 4px; }
.pane-right .tabbar { margin-right: -3px; }
.tab { display: flex; align-items: center; clip-path: polygon(0 100%, 22px 0, 100% 0, 100% 100%); font-size: 10.900px; }
.tab-active { height: 23px; width: 213px; background: #fdfdfd; padding-left: 25px; font-weight: 600; color: #111; }
.tab-idle { height: 22px; margin-top: 1px; margin-left: 6px; width: 157px; background: #c6c6c6; padding-left: 20px; color: #222; }
.tab-icon { width: 16px; height: 16px; flex: none; }
.tab-name { margin-left: 7px; white-space: nowrap; }
.tab-x { width: 15px; height: 15px; margin-left: 8px; background: #c8505a; color: #fff; font: 700 10px/14px "Liberation Sans", sans-serif; text-align: center; flex: none; }
.tab-idle .tab-x { margin-left: 9px; }
.tabs-menu { margin-left: auto; margin-top: 9px; margin-right: 11px; width: 0; height: 0; border: 5px solid transparent; border-top: 5px solid #111; border-bottom: 0; }

.frame { flex: 1; display: flex; flex-direction: column; margin-left: 1px; margin-right: 5px; border-left: 3px solid #8c8c8c; min-height: 0; }
.pane-right .frame { margin-right: 3px; }
.pdfbar { height: 50px; border-top: 2px solid #8c8c8c; border-bottom: 1px solid #cfcfcf; background: #fafafa; display: flex; align-items: center; padding: 0 28px 0 4px; flex: none; }
.pb { width: 44px; display: flex; justify-content: center; align-items: center; flex: none; color: #6e6e6e; }
.pb-off { color: #b9b9b9; }
.pi { width: 21px; height: 24px; }
.pi-lg { width: 24px; height: 25px; }
.psep { width: 1px; height: 28px; background: #c8c8c8; margin: 0 9px 0 11px; flex: none; }
.pager { width: 67px; margin-left: 10px; display: flex; align-items: center; font-size: 12px; color: #333; flex: none; }
.pager-cur { width: 28px; height: 26px; border-bottom: 1px solid #c8c8c8; text-align: center; line-height: 26px; color: #444; flex: none; }
.pager-total { margin-left: 6px; white-space: nowrap; }
.pb-fit { position: relative; }
.mini-caret { position: absolute; left: 36px; top: 9px; width: 0; height: 0; border: 3.500px solid transparent; border-top: 4px solid #6e6e6e; border-bottom: 0; }
.pb-kbd { margin-left: 12px; }
.share { margin-left: auto; width: 100px; height: 32px; border: 0; border-radius: 16px; background: #2680eb; color: #fff; font: 500 15.500px "Open Sans", sans-serif; display: flex; align-items: center; justify-content: center; gap: 5px; padding: 0; flex: none; }
.share-icon { width: 18px; height: 18px; }
.pb-help { margin-left: 9px; }
.signin { margin-left: 22px; font-size: 17.300px; font-weight: 500; color: #4b4b4b; white-space: nowrap; }

.viewer { flex: 1; display: flex; min-height: 0; position: relative; }
.gutter { width: 19px; background: #ebebeb; display: flex; align-items: center; justify-content: center; flex: none; }
.arrow-r { width: 0; height: 0; border: 5px solid transparent; border-left: 5px solid #666; border-right: 0; }
.arrow-l { width: 0; height: 0; border: 5px solid transparent; border-right: 5px solid #666; border-left: 0; }
.canvas { flex: 1; background: #999; display: flex; justify-content: center; align-items: flex-start; min-width: 0; overflow: hidden; }
.canvas-left { padding-right: 2px; }
.canvas-right { padding-top: 100px; }
.side { background: #ebebeb; display: flex; align-items: center; justify-content: center; flex: none; border-left: 1px solid #dedede; position: relative; }
.side-a { width: 17px; }
.side-b { width: 20px; }
.thumb { position: absolute; left: 50%; width: 2px; background: #8a8a8a; }
.thumb-left { top: 17px; height: 28px; margin-left: -1px; }
.thumb-right { top: 193px; height: 64px; margin-left: -1px; }
.frame-foot { height: 5px; border-top: 2px solid #cfcfcf; background: #fff; flex: none; }

/* cover page */
.cover { width: 666px; height: 100%; background: #fff; padding: 163px 0 0 78px; }
.cover-bar { width: 515px; height: 11px; background: #3f7ab8; border: 3px solid #4f6472; }
.cover-kicker { margin: 20px 0 0 1px; font: 700 19.500px/24px "Liberation Mono", monospace; color: #9a9a9a; }
.cover-title { margin: 0 0 0 1px; font: 700 39px/50px Inter, sans-serif; letter-spacing: 1.270px; color: #0b5394; white-space: nowrap; }
.cover-sub { margin: 165px 0 0 1px; font: 300 20.400px/28px Lato, sans-serif; color: #adadad; }
.ws-logo { margin-top: 232px; display: flex; align-items: center; gap: 10px; margin-left: 2px; }
.ws-shield { width: 30px; height: 32px; flex: none; }
.ws-name { font: 700 19px/24px "Liberation Sans", sans-serif; letter-spacing: -.8px; }
.ws-a { color: #2a96c6; }
.ws-b { color: #0d5c78; }

/* cheat sheet page */
.sheet { width: 854px; height: 660px; background: #fff; position: relative; border-top: 1px solid #c8c8c8; font: 400 13.100px/17.240px Roboto, sans-serif; color: #111; }
.sheet-top { height: 49px; background: #000; color: #fff; display: flex; align-items: flex-start; overflow: hidden; position: relative; }
.ilc-circle { width: 36px; height: 36px; margin: 7px 0 0 12px; flex: none; }
.ilc-word { margin: 14px 0 0 6px; width: 150px; flex: none; font: italic 700 19px/24px "Liberation Serif", serif; white-space: nowrap; }
.sheet-title { margin: 10px 0 0 0; font: 700 44px/52px Roboto, sans-serif; white-space: nowrap; width: 595px; flex: none; }
.sheet-page { margin-top: 15px; font: 500 12.500px/16px Roboto, sans-serif; white-space: nowrap; }
.sheet-band { height: 44px; background: #808080; color: #fff; display: flex; padding: 11px 0 0 191px; gap: 20px; font-size: 13.200px; line-height: 17px; }
.band-link { text-decoration: underline; }
.sec-head { display: flex; align-items: center; }
.sec6 { height: 29px; margin-top: 14px; padding: 0 16px; }
.num { width: 28px; height: 28px; border-radius: 50%; border: 2px solid #000; background: #d4d4d4; font: 400 20px/24px Roboto, sans-serif; text-align: center; flex: none; }
.sec-title { margin: 0 0 0 10px; font: 500 21.600px/28px Roboto, sans-serif; color: #0a32ff; white-space: nowrap; flex: none; }
.sec-rule-wrap { flex: 1; align-self: flex-start; height: 15px; margin-left: 8px; border-bottom: 2px solid #cdcdcd; }
.sec-note { margin: -1px 0 0; font: italic 400 10.700px/13px Roboto, sans-serif; color: #555; white-space: nowrap; }
.sec-desc { margin: 4px 0 0 54px; }
.sheet-cols { display: flex; margin-top: 13.800px; padding-left: 17px; white-space: nowrap; }
.col1 { width: 202px; }
.col2 { width: 208px; }
.col3 { flex: 1; padding-right: 15px; }
.grp { margin-bottom: 17.240px; }
.grp > div, .sec7-body > div, .coerce-list > div, .reds > div { height: 17.240px; }
.grp > .ops, .grp > .reds { height: auto; }
.gh { font-weight: 500; color: #111; }
.ops { display: grid; grid-template-columns: 34px 1fr; grid-auto-rows: 17.240px; }
.w24 { grid-template-columns: 24px 1fr; }
.w26 { grid-template-columns: 26px 1fr; }
.w34 { grid-template-columns: 34px 1fr; }
.w38 { grid-template-columns: 38px 1fr; }
.w41 { grid-template-columns: 41px 1fr; }
.w42 { grid-template-columns: 42px 1fr; }
.w47 { grid-template-columns: 47px 1fr; }
.op { color: #888; font-size: 11.500px; }
.op b, .reds b { color: #d92b3a; font-weight: 400; font-size: 13.100px; }
.reds { color: #888; }
.spread { color: #888; }
.blank { grid-column: 1 / -1; }
.short-link { font-size: 10.300px; color: #888; }
.sec7 { height: 28px; margin-top: 24.300px; }
.sec7 .sec-rule { flex: 1; height: 2px; margin-left: 7px; background: #cdcdcd; }
.sec7 .sec-title { margin-left: 11px; }
.sec7-body { margin-top: 6px; }
.coerce { display: flex; margin-top: 12px; }
.coerce-list { width: 224px; flex: none; }
.coerce-list > .coerce-gap { margin-top: 12px; }
.code { margin: -2px 0 0 0; width: 177px; height: 69px; background: #ebebeb; padding: 9px 0 0 18px; font: 400 12.700px/24px "DejaVu Sans Mono", monospace; color: #333; }
.c-num { color: #1a55e8; }
.c-str { color: #888; }
.c-red { color: #d92b3a; }
.c-com { color: #999; }
.curve-arrow { position: absolute; left: 538px; top: 514px; width: 114px; height: 64px; }

.sheet-foot { position: absolute; left: 0; right: 0; bottom: 0; height: 67px; color: #fff; }
.foot-bg { position: absolute; inset: 0; width: 100%; height: 100%; }
.foot-quote { position: absolute; left: 262px; top: 46px; font: italic 500 10.600px/16px Roboto, sans-serif; white-space: nowrap; }
.foot-brand { position: absolute; left: 703px; top: 20px; }
.foot-logo { display: flex; align-items: center; gap: 5px; }
.foot-mark { width: 28px; height: 20px; flex: none; }
.foot-word { font: italic 700 19px/22px "Liberation Serif", serif; white-space: nowrap; }
.foot-url { margin: 0 0 0 9px; font: 500 11.600px/15px Roboto, sans-serif; white-space: nowrap; }

/* status */
.status { height: 21px; padding-top: 2px; background: #f0f0f0; border-top: 1px solid #bdbdbd; display: flex; align-items: center; font: 400 11.600px/20px "DejaVu Sans Mono", monospace; color: #666; flex: none; }
.st { height: 17px; line-height: 17px; border-right: 1px solid #cfcfcf; white-space: nowrap; flex: none; }
.st-path { width: 587px; padding-left: 6px; color: #111; }
.st-type { width: 118px; padding-left: 19px; }
.st-enc { width: 155px; padding-left: 39px; }
.st-pos { width: 299px; padding-left: 40px; }
.st-match { width: 226px; padding-left: 40px; }
.st-sel { width: 233px; padding-left: 40px; }
.st-rest { border: 0; }
.desktop-strip { height: 3px; background: linear-gradient(90deg, #e4e0ea, #f0dcd8 30%, #e4dce8 60%, #dcdce8 85%, #ececec 86%); flex: none; }
```
